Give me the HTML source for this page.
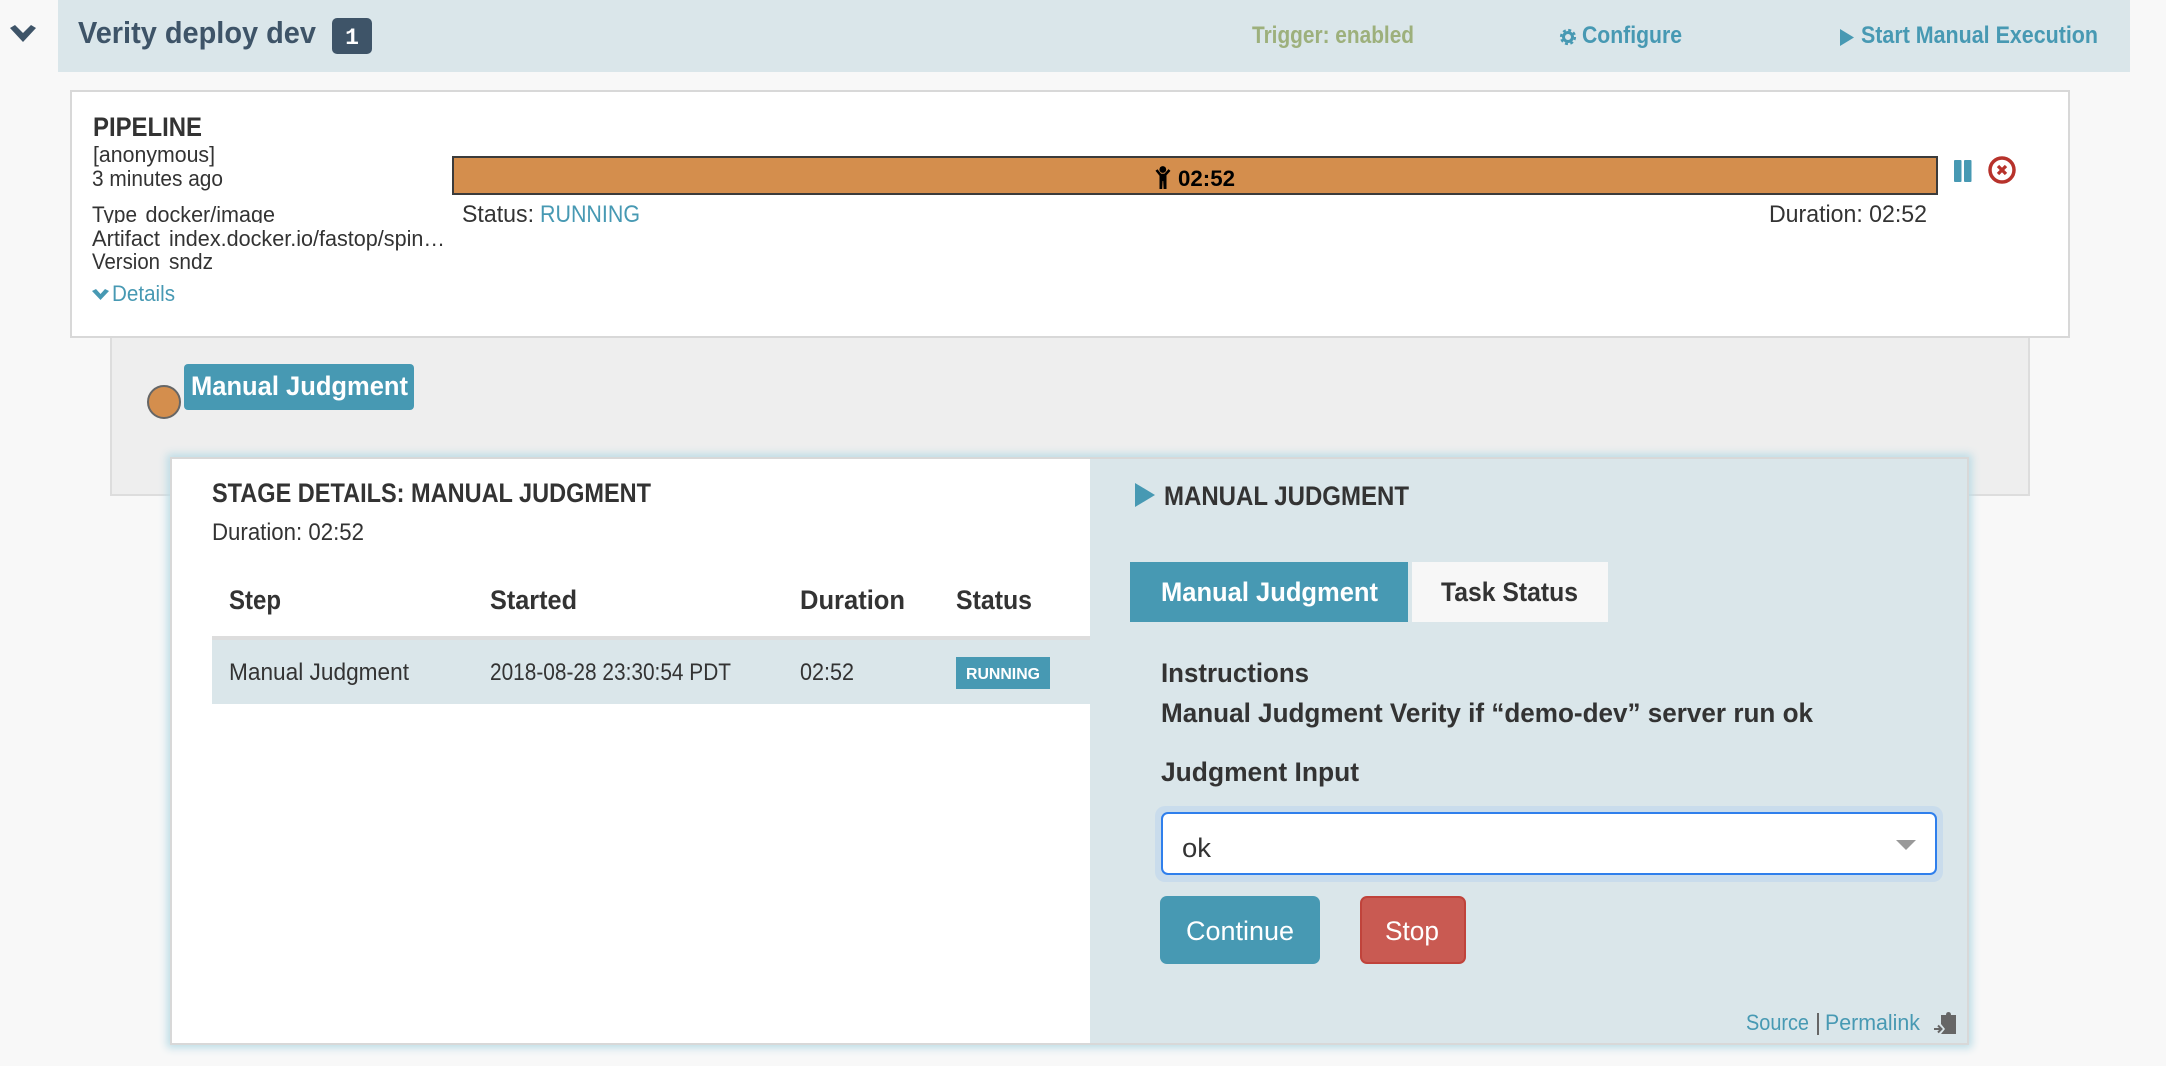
<!DOCTYPE html>
<html lang="en">
<head>
<meta charset="utf-8">
<title>Verity deploy dev</title>
<style>
html,body{margin:0;padding:0;width:2166px;height:1066px;overflow:hidden;background:#f8f8f8}
.b{position:absolute;box-sizing:border-box}
svg{position:absolute;left:0;top:0}
text{font-family:"Liberation Sans",sans-serif;fill:#333;font-size:24px}
.s{font-weight:700}
.h{font-size:27px;font-weight:700}
.m{font-size:22px}
.l{fill:#4799b3}
.w{fill:#fff}
</style>
</head>
<body>
<div class="b" style="left:58px;top:0;width:2072px;height:72px;background:#dae6ea"></div>
<div class="b" style="left:332px;top:18px;width:40px;height:36px;background:#3e5468;border-radius:5px"></div>
<div class="b" style="left:110px;top:330px;width:1920px;height:166px;background:#eee;border:2px solid #ddd"></div>
<div class="b" style="left:70px;top:90px;width:2000px;height:248px;background:#fff;border:2px solid #d8d8d8"></div>
<div class="b" style="left:452px;top:156px;width:1486px;height:39px;background:#d48e4d;border:2.500px solid #3b3b3b"></div>
<div class="b" style="left:184px;top:364px;width:230px;height:46px;background:#4799b3;border-radius:4px"></div>
<div class="b" style="left:147px;top:385px;width:34px;height:34px;background:#d48e4d;border:2px solid #666;border-radius:50%"></div>
<div class="b" style="left:170px;top:457px;width:1799px;height:588px;background:#fff;border:2px solid #d8d8d8;box-shadow:0 0 8px 3px #bcdce6"></div>
<div class="b" style="left:1090px;top:459px;width:877px;height:584px;background:#dae6ea"></div>
<div class="b" style="left:212px;top:636px;width:878px;height:4px;background:#ddd"></div>
<div class="b" style="left:212px;top:640px;width:878px;height:64px;background:#dae6ea"></div>
<div class="b" style="left:956px;top:657px;width:94px;height:32px;background:#4799b3"></div>
<div class="b" style="left:1130px;top:562px;width:278px;height:60px;background:#4799b3"></div>
<div class="b" style="left:1412px;top:562px;width:196px;height:60px;background:#f7f7f7"></div>
<div class="b" style="left:1155px;top:806px;width:788px;height:76px;background:#c9dcec;border-radius:10px"></div>
<div class="b" style="left:1161px;top:812px;width:776px;height:63px;background:#fff;border:2.500px solid #2f7fec;border-radius:7px"></div>
<div class="b" style="left:1160px;top:896px;width:160px;height:68px;background:#4799b3;border-radius:7px"></div>
<div class="b" style="left:1360px;top:896px;width:106px;height:68px;background:#c95a52;border:2px solid #c0433b;border-radius:7px"></div>
<div class="b" style="left:1817px;top:1013px;width:2px;height:22px;background:#666"></div>

<svg width="2166" height="1066" viewBox="0 0 2166 1066" xmlns="http://www.w3.org/2000/svg">
<defs><clipPath id="c1"><rect x="85" y="200" width="360" height="23"/></clipPath></defs>

<path d="M10 28 L15 25 L23 33 L31 25 L36 28 L23 42 Z" fill="#3e5468"/>
<text class="s" x="78" y="43" textLength="238" lengthAdjust="spacingAndGlyphs" style="font-size:31px;fill:#3e5468">Verity deploy dev</text>
<text x="352" y="44" text-anchor="middle" style="font-family:'Liberation Mono',monospace;font-weight:700;font-size:23px;fill:#fff">1</text>
<text class="s" x="1252" y="43" textLength="162" lengthAdjust="spacingAndGlyphs" style="fill:#9db07c">Trigger: enabled</text>

<circle cx="1568" cy="37" r="4.500" fill="none" stroke="#4799b3" stroke-width="3"/>
<circle cx="1568" cy="37" r="7" fill="none" stroke="#4799b3" stroke-width="2.200" stroke-dasharray="3 2.500"/>
<text class="s l" x="1582" y="43" textLength="100" lengthAdjust="spacingAndGlyphs">Configure</text>
<path d="M1840 29 L1854 37.500 L1840 46 Z" fill="#4799b3"/>
<text class="s l" x="1861" y="43" textLength="237" lengthAdjust="spacingAndGlyphs">Start Manual Execution</text>

<text class="h" x="93" y="136" textLength="109" lengthAdjust="spacingAndGlyphs">PIPELINE</text>
<text class="m" x="93" y="162" textLength="122" lengthAdjust="spacingAndGlyphs">[anonymous]</text>
<text class="m" x="92" y="186" textLength="131" lengthAdjust="spacingAndGlyphs">3 minutes ago</text>
<g clip-path="url(#c1)">
<text class="m" x="92" y="222" textLength="45" lengthAdjust="spacingAndGlyphs">Type</text>
<text class="m" x="145.500" y="222" textLength="129.500" lengthAdjust="spacingAndGlyphs">docker/image</text>
</g>
<text class="m" x="92" y="246" textLength="68" lengthAdjust="spacingAndGlyphs">Artifact</text>
<text class="m" x="169" y="246" textLength="276" lengthAdjust="spacingAndGlyphs">index.docker.io/fastop/spin…</text>
<text class="m" x="92" y="269" textLength="68" lengthAdjust="spacingAndGlyphs">Version</text>
<text class="m" x="169" y="269" textLength="44" lengthAdjust="spacingAndGlyphs">sndz</text>
<path d="M92 291 L96 289 L100.500 294 L105 289 L109 291 L100.500 300 Z" fill="#4799b3"/>
<text class="m l" x="112" y="301" textLength="63" lengthAdjust="spacingAndGlyphs">Details</text>

<circle cx="1162.800" cy="169.500" r="3.400" fill="#000"/>
<path d="M1156.500 170 L1160.500 175 L1165 175 L1169.500 170" fill="none" stroke="#000" stroke-width="2.600"/>
<path d="M1159.500 175 L1166.500 175 L1166.500 189 L1163.600 189 L1163.200 181 L1162.600 181 L1162.200 189 L1159.500 189 Z" fill="#000"/>
<text class="s" x="1178" y="186" textLength="57" lengthAdjust="spacingAndGlyphs" style="font-size:22px;fill:#000">02:52</text>

<text x="462" y="222" textLength="72" lengthAdjust="spacingAndGlyphs">Status:</text>
<text class="l" x="540" y="222" textLength="100" lengthAdjust="spacingAndGlyphs">RUNNING</text>
<text x="1769" y="222" textLength="158" lengthAdjust="spacingAndGlyphs">Duration: 02:52</text>

<rect x="1954" y="160" width="7.500" height="22" rx="1" fill="#4799b3"/>
<rect x="1964" y="160" width="7.500" height="22" rx="1" fill="#4799b3"/>
<circle cx="2002" cy="170" r="12" fill="none" stroke="#b7322b" stroke-width="3.500"/>
<path d="M1998 166 L2006 174 M2006 166 L1998 174" stroke="#b7322b" stroke-width="3.300"/>

<text class="h w" x="191" y="395" textLength="217" lengthAdjust="spacingAndGlyphs">Manual Judgment</text>

<text class="h" x="212" y="502" textLength="439" lengthAdjust="spacingAndGlyphs">STAGE DETAILS: MANUAL JUDGMENT</text>
<text x="212" y="540" textLength="152" lengthAdjust="spacingAndGlyphs">Duration: 02:52</text>
<text class="h" x="229" y="609" textLength="52" lengthAdjust="spacingAndGlyphs">Step</text>
<text class="h" x="490" y="609" textLength="87" lengthAdjust="spacingAndGlyphs">Started</text>
<text class="h" x="800" y="609" textLength="105" lengthAdjust="spacingAndGlyphs">Duration</text>
<text class="h" x="956" y="609" textLength="76" lengthAdjust="spacingAndGlyphs">Status</text>
<text x="229" y="680" textLength="180" lengthAdjust="spacingAndGlyphs">Manual Judgment</text>
<text x="490" y="680" textLength="241" lengthAdjust="spacingAndGlyphs">2018-08-28 23:30:54 PDT</text>
<text x="800" y="680" textLength="54" lengthAdjust="spacingAndGlyphs">02:52</text>
<text class="s w" x="966" y="679" textLength="74" lengthAdjust="spacingAndGlyphs" style="font-size:16px">RUNNING</text>

<path d="M1135 483 L1155 495 L1135 507 Z" fill="#4799b3"/>
<text class="h" x="1164" y="505" textLength="245" lengthAdjust="spacingAndGlyphs">MANUAL JUDGMENT</text>
<text class="h w" x="1161" y="601" textLength="217" lengthAdjust="spacingAndGlyphs">Manual Judgment</text>
<text class="h" x="1441" y="601" textLength="137" lengthAdjust="spacingAndGlyphs">Task Status</text>
<text class="h" x="1161" y="682" textLength="148" lengthAdjust="spacingAndGlyphs">Instructions</text>
<text class="h" x="1161" y="722" textLength="652" lengthAdjust="spacingAndGlyphs">Manual Judgment Verity if “demo-dev” server run ok</text>
<text class="h" x="1161" y="781" textLength="198" lengthAdjust="spacingAndGlyphs">Judgment Input</text>
<text x="1182" y="857" textLength="29" lengthAdjust="spacingAndGlyphs" style="font-size:27px">ok</text>
<path d="M1896 840 L1916 840 L1906 850 Z" fill="#999"/>
<text class="w" x="1186" y="940" textLength="108" lengthAdjust="spacingAndGlyphs" style="font-size:27px">Continue</text>
<text class="w" x="1385" y="940" textLength="54" lengthAdjust="spacingAndGlyphs" style="font-size:27px">Stop</text>

<text class="l" x="1746" y="1030" textLength="63" lengthAdjust="spacingAndGlyphs" style="font-size:22px">Source</text>
<text class="l" x="1825" y="1030" textLength="95" lengthAdjust="spacingAndGlyphs" style="font-size:22px">Permalink</text>
<path d="M1941 1015 L1946 1015 Q1946 1012 1948.500 1012 Q1951 1012 1951 1015 L1956 1015 L1956 1034 L1941 1034 L1945 1029 L1941 1024 Z" fill="#666"/>
<path d="M1934 1029 L1941 1029 M1938 1025.500 L1941.500 1029 L1938 1032.500" fill="none" stroke="#666" stroke-width="2"/>
</svg>
</body>
</html>
